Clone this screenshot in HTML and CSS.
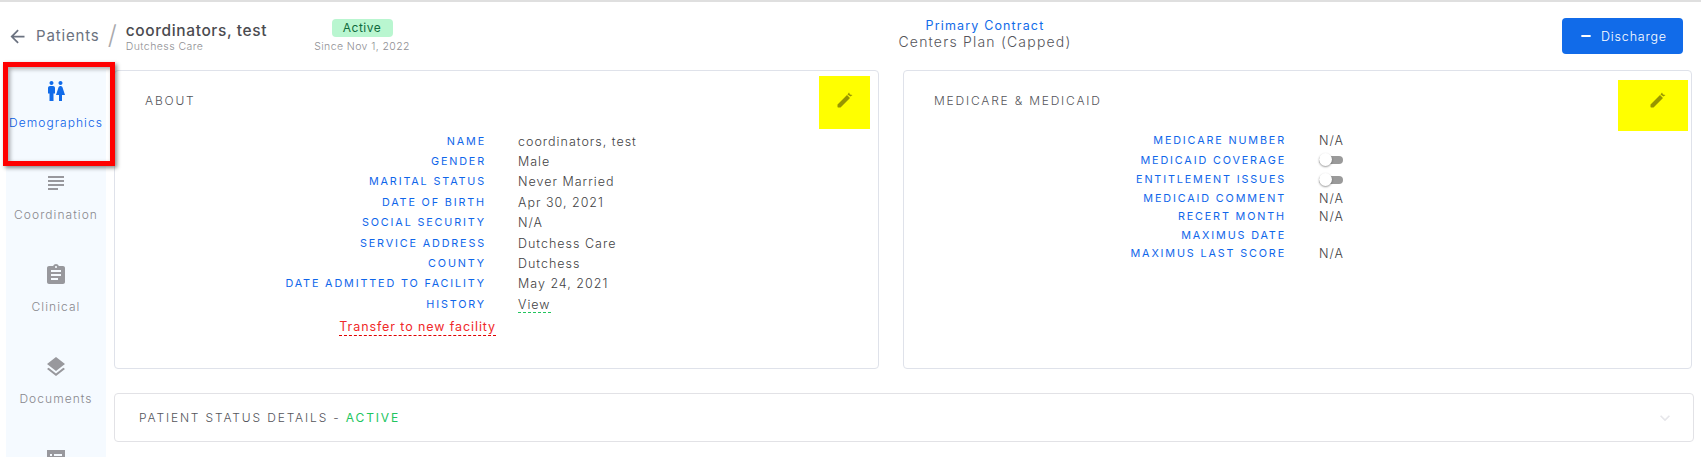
FILE: index.html
```html
<!DOCTYPE html>
<html lang="en">
<head>
<meta charset="utf-8">
<title>Patient demographics</title>
<link rel="stylesheet" href="styles.css">
</head>
<body>
<div class="page">
  <header class="top">
    <div class="crumbs">
      <svg class="back" viewBox="0 0 24 24"><path d="M20 11H7.830l5.590-5.590L12 4l-8 8 8 8 1.410-1.410L7.830 13H20v-2z"/></svg>
      <span class="crumb-root">Patients</span>
      <span class="crumb-sep">/</span>
      <div class="who">
        <div class="who-name">coordinators, test</div>
        <div class="who-sub">Dutchess Care</div>
      </div>
      <div class="status">
        <span class="badge">Active</span>
        <span class="since">Since Nov 1, 2022</span>
      </div>
    </div>
    <div class="contract">
      <div class="contract-label">Primary Contract</div>
      <div class="contract-name">Centers Plan (Capped)</div>
    </div>
    <button class="discharge" type="button">
      <svg viewBox="0 0 24 24"><path d="M19 13.500H5v-3h14v3z"/></svg>
      <span>Discharge</span>
    </button>
  </header>

  <div class="body-row">
    <nav class="side">
      <a class="side-item active">
        <svg viewBox="0 0 24 24"><path d="M5.500 22v-7.500H4V9c0-1.100.9-2 2-2h3c1.100 0 2 .9 2 2v5.500H9.500V22h-4zM18 22v-6h3l-2.540-7.630C18.180 7.550 17.420 7 16.560 7h-.12c-.86 0-1.630.55-1.900 1.370L12 16h3v6h3zM7.500 6c1.110 0 2-.89 2-2s-.89-2-2-2-2 .89-2 2 .89 2 2 2zm9 0c1.110 0 2-.89 2-2s-.89-2-2-2-2 .89-2 2 .89 2 2 2z"/></svg>
        <span>Demographics</span>
      </a>
      <a class="side-item">
        <svg viewBox="0 0 24 24"><path d="M14 17H4v2h10v-2zm6-8H4v2h16V9zM4 15h16v-2H4v2zM4 5v2h16V5H4z"/></svg>
        <span>Coordination</span>
      </a>
      <a class="side-item">
        <svg viewBox="0 0 24 24"><path d="M19 3h-4.180C14.400 1.840 13.300 1 12 1c-1.300 0-2.400.84-2.820 2H5c-1.100 0-2 .9-2 2v14c0 1.100.9 2 2 2h14c1.100 0 2-.9 2-2V5c0-1.100-.9-2-2-2zm-7 0c.55 0 1 .45 1 1s-.45 1-1 1-1-.45-1-1 .45-1 1-1zm2 14H7v-2h7v2zm3-4H7v-2h10v2zm0-4H7V7h10v2z"/></svg>
        <span>Clinical</span>
      </a>
      <a class="side-item">
        <svg viewBox="0 0 24 24"><path d="M11.990 18.540l-7.370-5.730L3 14.070l9 7 9-7-1.630-1.270-7.380 5.740zM12 16l7.360-5.730L21 9l-9-7-9 7 1.630 1.270L12 16z"/></svg>
        <span>Documents</span>
      </a>
      <a class="side-item">
        <svg viewBox="0 0 24 24"><path fill-rule="evenodd" d="M3 3h18v18H3zM6 7v2h2V7zM10 7v2h8V7z"/></svg>
      </a>
    </nav>

    <main class="content">
      <div class="cards">
        <section class="card card-about">
          <h2 class="card-title">About</h2>
          <button class="edit edit-about" type="button"><svg viewBox="0 0 16 16"><path d="M0.500 12.500L10 3l3 3-9.500 9.500H1l-.5-.5zM10.500 2.500L12 0.500l1 2 2.500.5-2 1.500z"/></svg></button>
          <dl class="facts facts-about">
            <dt>Name</dt><dd>coordinators, test</dd>
            <dt>Gender</dt><dd>Male</dd>
            <dt>Marital Status</dt><dd>Never Married</dd>
            <dt>Date of Birth</dt><dd>Apr 30, 2021</dd>
            <dt>Social Security</dt><dd>N/A</dd>
            <dt>Service Address</dt><dd>Dutchess Care</dd>
            <dt>County</dt><dd>Dutchess</dd>
            <dt>Date Admitted to Facility</dt><dd>May 24, 2021</dd>
            <dt>History</dt><dd><a class="view">View</a></dd>
          </dl>
          <div class="transfer-row"><a class="transfer">Transfer to new facility</a></div>
        </section>

        <section class="card card-med">
          <h2 class="card-title">Medicare &amp; Medicaid</h2>
          <button class="edit edit-med" type="button"><svg viewBox="0 0 16 16"><path d="M0.500 12.500L10 3l3 3-9.500 9.500H1l-.5-.5zM10.500 2.500L12 0.500l1 2 2.500.5-2 1.500z"/></svg></button>
          <dl class="facts facts-med">
            <dt>Medicare Number</dt><dd>N/A</dd>
            <dt>Medicaid Coverage</dt><dd><span class="toggle"><span class="knob"></span></span></dd>
            <dt>Entitlement Issues</dt><dd><span class="toggle"><span class="knob"></span></span></dd>
            <dt>Medicaid Comment</dt><dd>N/A</dd>
            <dt>Recert Month</dt><dd>N/A</dd>
            <dt>Maximus Date</dt><dd></dd>
            <dt>Maximus Last Score</dt><dd>N/A</dd>
          </dl>
        </section>
      </div>

      <section class="card status-card">
        <h2 class="status-title">Patient Status Details - <span class="status-active">Active</span></h2>
        <svg class="chev" viewBox="0 0 24 24"><path d="M7.410 8.590L12 13.170l4.590-4.580L18 10l-6 6-6-6 1.410-1.410z"/></svg>
      </section>
    </main>
  </div>
  <div class="callout"></div>
</div>
</body>
</html>
```
FILE: styles.css
```css
* { box-sizing: border-box; }
html, body { margin: 0; padding: 0; height: 457px; overflow: hidden; background: #fff; }
body { font-family: Inter, "Liberation Sans", sans-serif; color: #4a4a4f; }
.page { height: 457px; overflow: hidden; border-top: 2px solid #dfdfdf; position: relative; }

.top { display: flex; align-items: flex-start; height: 68px; }
.crumbs { display: flex; align-items: flex-start; width: 885px; padding-left: 7px; flex: none; }
.back { width: 21px; height: 21px; fill: #6b7280; margin-top: 24px; flex: none; }
.crumb-root { margin-left: 8px; margin-top: 23px; font-size: 15px; font-weight: 400; letter-spacing: 0.85px; line-height: 22px; color: #6b7280; }
.crumb-sep { margin-left: 8px; margin-top: 18px; font-size: 26px; line-height: 30px; color: #a9a9ad; font-weight: 300; }
.who { margin-left: 9px; margin-top: 19px; }
.who-name { font-size: 15.5px; font-weight: 500; letter-spacing: 0.62px; line-height: 20px; color: #4b4b50; }
.who-sub { font-size: 10.5px; font-weight: 300; letter-spacing: 0.45px; line-height: 13px; margin-top: -1px; color: #8f8f94; }
.status { display: flex; flex-direction: column; align-items: center; margin-left: 47px; margin-top: 17px; }
.badge { width: 61px; height: 18px; border-radius: 4px; background: #b9f6d0; color: #0f6b3c; font-size: 12px; letter-spacing: 0.5px; line-height: 18px; text-align: center; }
.since { margin-top: 2px; font-size: 10.5px; font-weight: 300; letter-spacing: 0.4px; line-height: 16px; color: #8f8f94; white-space: nowrap; }

.contract { width: 200px; text-align: center; flex: none; padding-top: 16px; }
.contract-label { font-size: 12.5px; font-weight: 400; letter-spacing: 1.15px; line-height: 16px; color: #116be9; }
.contract-name { font-size: 14px; font-weight: 300; letter-spacing: 1.2px; line-height: 16px; color: #55555b; }

.discharge { margin-left: auto; margin-right: 18px; margin-top: 16px; width: 121px; height: 36px; border: 0; border-radius: 4px; background: #116be9; color: #fff; display: flex; align-items: center; justify-content: center; gap: 7px; font-family: inherit; font-size: 12.5px; font-weight: 300; letter-spacing: 0.8px; padding: 0; }
.discharge svg { width: 16px; height: 16px; fill: #fff; }

.body-row { display: flex; align-items: flex-start; height: 387px; }
.side { width: 100px; margin-left: 6px; background: #f5faff; flex: none; height: 387px; overflow: hidden; }
.side-item { display: flex; flex-direction: column; align-items: center; height: 92px; padding-top: 9px; color: #88888d; font-size: 12px; font-weight: 300; letter-spacing: 1.05px; }
.side-item svg { width: 24px; height: 24px; fill: #98989d; }
.side-item span { margin-top: 12px; line-height: 16px; }
.side-item.active { color: #0a60e8; }
.side-item.active svg { fill: #116be9; }

.content { margin-left: 8px; width: 1580px; flex: none; }
.cards { display: grid; grid-template-columns: 765px 789px; column-gap: 24px; }
.card { background: #fff; border: 1px solid #dfe2ea; border-radius: 4px; position: relative; }
.card-about, .card-med { height: 299px; padding-top: 22px; }
.card-title { margin: 0; padding-left: 30px; font-size: 12px; font-weight: 300; letter-spacing: 1.8px; line-height: 16px; text-transform: uppercase; color: #55555b; }

.edit { position: absolute; background: #ffff00; border: 0; padding: 0; display: flex; justify-content: center; }
.edit svg { width: 16px; height: 16px; fill: #989600; }
.edit-about { left: 704px; top: 5px; width: 51px; height: 53px; padding-top: 16px; }
.edit-med { left: 714px; top: 9px; width: 70px; height: 51px; padding: 12px 0 0 9px; }

.facts { display: grid; margin: 0; align-items: center; }
.facts dt { text-align: right; text-transform: uppercase; font-size: 10.8px; font-weight: 400; letter-spacing: 1.85px; color: #0f66ea; }
.facts dd { margin: 0; font-size: 12.5px; font-weight: 300; letter-spacing: 1px; color: #3f3f44; }
.facts-about { grid-template-columns: 371px 1fr; column-gap: 32px; grid-auto-rows: 20.4px; margin-top: 22px; }
.facts-med { grid-template-columns: 382px 1fr; column-gap: 33px; grid-template-rows: 20px 20px 19px 18px 19px 18px 18px; margin-top: 21px; }
.view { border-bottom: 1px dashed #22c55e; }
.transfer-row { width: 381px; text-align: right; margin-top: 0; }
.transfer { display: inline-block; font-size: 12.5px; font-weight: 400; letter-spacing: 0.9px; line-height: 17px; color: #f02a2a; border-bottom: 1px dashed #e00000; }

.toggle { display: block; width: 24px; height: 8px; border-radius: 4px; background: #9a9a9a; position: relative; }
.knob { position: absolute; left: 0; top: -3px; width: 13px; height: 13px; border-radius: 50%; background: #fff; box-shadow: 0 1px 2px rgba(0,0,0,.4); }

.status-card { margin-top: 24px; height: 49px; width: 1580px; display: flex; align-items: center; justify-content: space-between; padding: 0 18px 0 24px; border-color: #e2e2e6; }
.status-title { margin: 0; font-size: 12px; font-weight: 300; letter-spacing: 1.85px; text-transform: uppercase; color: #55555b; }
.status-active { color: #22c55e; font-weight: 400; }
.chev { width: 20px; height: 20px; fill: #e6e6ea; }

.callout { position: absolute; left: 3px; top: 60px; width: 112px; height: 104px; border: 5px solid #ff0000; box-shadow: 2px 2px 4px rgba(0,0,0,.45), inset 2px 2px 4px rgba(0,0,0,.35); pointer-events: none; }
```
